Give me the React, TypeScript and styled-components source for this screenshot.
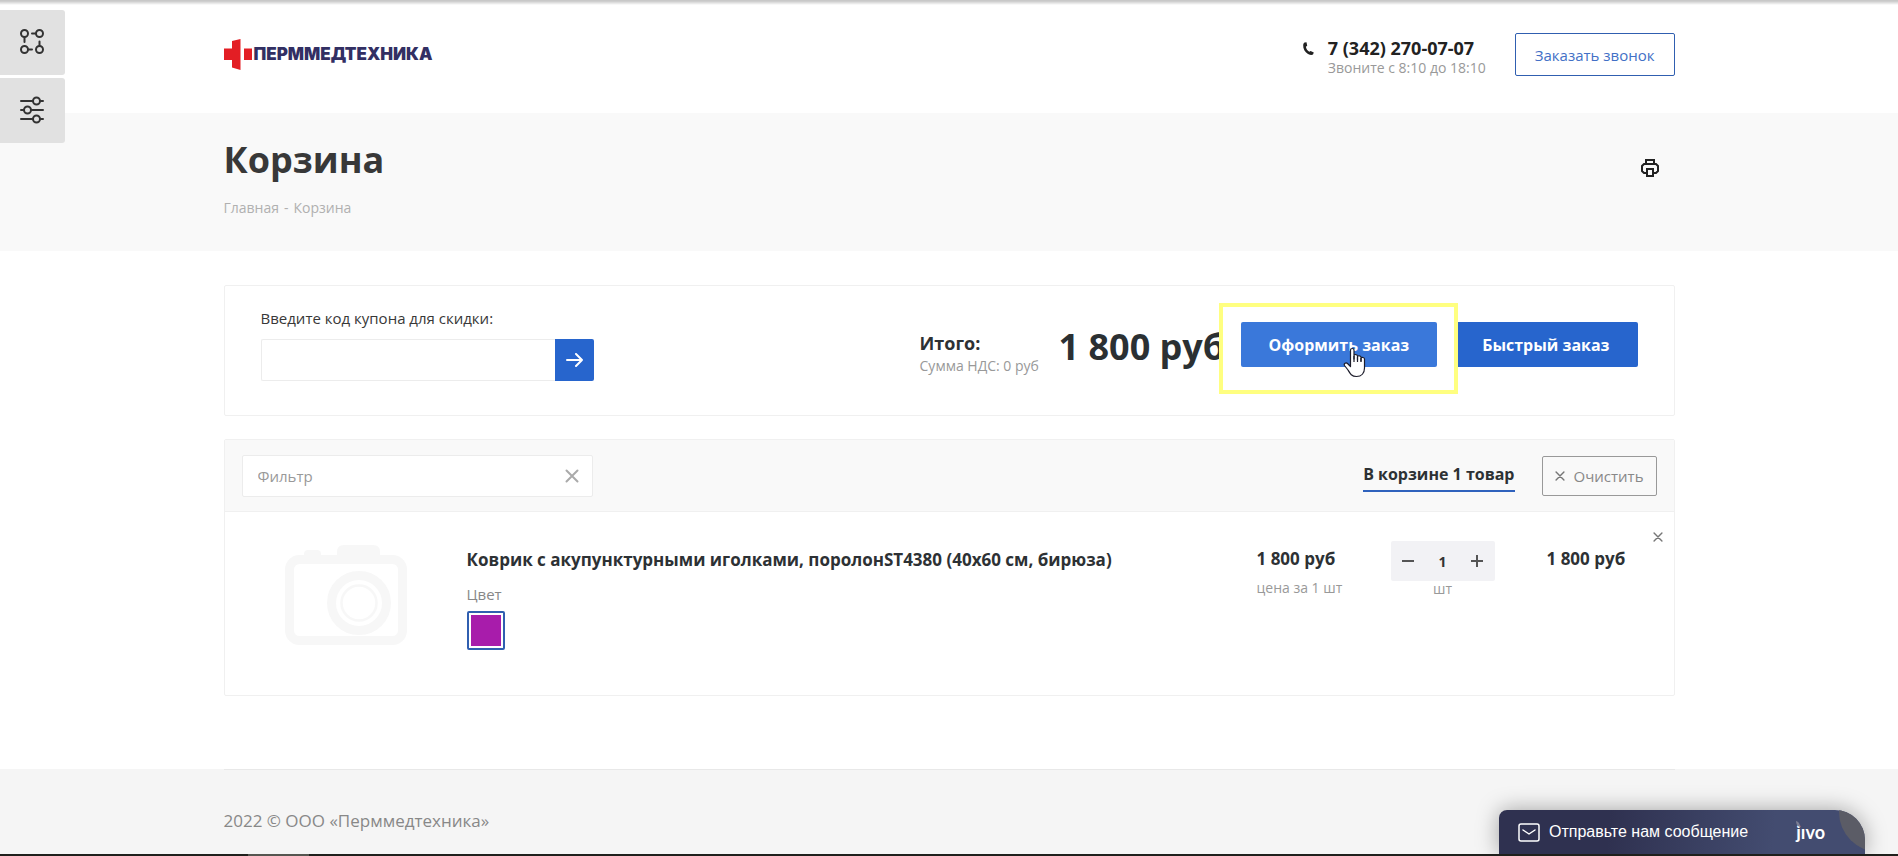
import React from "react";
import styled, { createGlobalStyle } from "styled-components";

const GlobalStyle = createGlobalStyle`
  *, *::before, *::after { box-sizing: border-box; }
  html, body { margin: 0; padding: 0; }
  body {
    background: #fff;
    color: #2d3134;
    font-family: "Open Sans", "Noto Sans", sans-serif;
    font-size: 14px;
    line-height: 20px;
  }
  button, input { font-family: inherit; margin: 0; }
  button { cursor: pointer; padding: 0; border: 0; background: none; }
  a { color: inherit; text-decoration: none; }
`;

const Page = styled.div`
  min-height: 100vh;
  display: flex;
  flex-direction: column;
`;

const TopShade = styled.div`
  position: fixed;
  inset: 0 0 auto 0;
  height: 5px;
  z-index: 5;
  background: linear-gradient(#c8c8c8 20%, #ffffff00);
`;

const Container = styled.div`
  width: 100%;
  max-width: 1451px;
  margin: 0 auto;
`;

const HeaderRow = styled(Container).attrs({ as: "header" })`
  display: flex;
  align-items: flex-start;
  padding: 33px 0 37px;
`;

const LogoLink = styled.a`
  display: flex;
  align-items: center;
  gap: 2px;
  margin-top: 6px;
  margin-right: auto;
  font-family: Inter, sans-serif;
  font-weight: 900;
  font-size: 17px;
  line-height: 31px;
  color: #322f63;
`;

const Phone = styled.div`
  display: grid;
  grid-template-columns: 25px 187px;
  margin-top: 3px;
  svg { margin-top: 6px; }
`;

const PhoneNumber = styled.a`
  font-size: 18px;
  line-height: 24px;
  font-weight: 700;
  color: #222;
`;

const PhoneHours = styled.span`
  grid-column: 2;
  line-height: 16px;
  color: #999;
`;

const CallButton = styled.button`
  height: 43px;
  padding: 0 19px;
  border: 1px solid #305fb0;
  border-radius: 2px;
  color: #4270c6;
  font-size: 15px;
`;

const TitleBand = styled.div`
  background: #f9f9f9;
  padding: 25px 0 33px;
`;

const TitleRow = styled(Container)`
  display: flex;
  justify-content: space-between;
  align-items: flex-start;
`;

const Title = styled.h1`
  margin: 0 0 16px;
  font-size: 36px;
  line-height: 44px;
  font-weight: 700;
  color: #383838;
`;

const Crumbs = styled.nav`
  display: flex;
  gap: 5px;
  color: #b0b0b0;
`;

const PrintButton = styled.button`
  margin: 21px 16px 0 0;
  height: 18px;
`;

const Main = styled(Container).attrs({ as: "main" })`
  padding: 34px 0 73px;
  display: grid;
  gap: 23px;
`;

const Panel = styled.section`
  border: 1px solid #f0f0f0;
  border-radius: 2px;
`;

const Summary = styled(Panel)`
  display: flex;
  align-items: flex-start;
  height: 131px;
  padding: 0 36px;
`;

const Coupon = styled.form`
  margin-right: auto;
  padding-top: 22px;
`;

const CouponLabel = styled.label`
  display: block;
  font-size: 15px;
  line-height: 20px;
  margin-bottom: 11px;
  color: #383838;
`;

const CouponField = styled.div`
  display: flex;
`;

const TextInput = styled.input`
  height: 42px;
  border: 1px solid #ececec;
  border-radius: 2px;
  background: #fff;
  padding: 0 15px;
  font-size: 15px;
  color: #333;
  &::placeholder { color: #999; opacity: 1; }
`;

const CouponInput = styled(TextInput)`
  width: 294px;
  border-right: 0;
  border-radius: 2px 0 0 2px;
`;

const CouponButton = styled.button`
  display: grid;
  place-items: center;
  width: 39px;
  height: 42px;
  background: #2765cd;
  border-radius: 0 2px 2px 0;
`;

const Total = styled.div`
  width: 139px;
  padding-top: 45px;
`;

const TotalLabel = styled.div`
  font-size: 18px;
  line-height: 24px;
  font-weight: 700;
`;

const Muted = styled.div`
  line-height: 22px;
  color: #999;
`;

const TotalPrice = styled.div`
  width: 182px;
  padding-top: 39px;
  white-space: nowrap;
  font-size: 36px;
  line-height: 44px;
  font-weight: 700;
  color: #2b3033;
`;

const Actions = styled.div`
  display: flex;
  gap: 17px;
  padding-top: 36px;
`;

const OrderButton = styled.button<{ $active?: boolean }>`
  position: relative;
  height: 45px;
  padding: 0 28px;
  border-radius: 2px;
  background: ${(p) => (p.$active ? "#3a78da" : "#2765cd")};
  color: #fff;
  font-size: 16px;
  font-weight: 700;
  white-space: nowrap;
`;

const Spotlight = styled.div`
  position: relative;
  z-index: 1;
  &::before {
    content: "";
    position: absolute;
    inset: -19px -21px -27px -22px;
    background: #fff;
    border: 4px solid #ffff80;
  }
`;

const Pointer = styled.svg`
  position: absolute;
  left: 102px;
  top: 25px;
`;

const Toolbar = styled.div`
  display: flex;
  align-items: center;
  height: 72px;
  padding: 0 17px;
  background: #f9f9f9;
  border-bottom: 1px solid #f0f0f0;
`;

const Filter = styled.div`
  position: relative;
  width: 351px;
  margin-right: auto;
`;

const FilterInput = styled(TextInput)`
  width: 100%;
`;

const FilterClear = styled.button`
  position: absolute;
  right: 14px;
  top: 14px;
  height: 14px;
`;

const CountTab = styled.a`
  margin-top: 3px;
  margin-right: 27px;
  padding-bottom: 4px;
  border-bottom: 2px solid #2f62bd;
  font-size: 16px;
  line-height: 24px;
  font-weight: 700;
`;

const ClearButton = styled.button`
  display: flex;
  align-items: center;
  gap: 9px;
  height: 40px;
  padding: 0 12px;
  border: 1px solid #999;
  border-radius: 2px;
  font-size: 15px;
  color: #888;
`;

const Items = styled.ul`
  list-style: none;
  margin: 0;
  padding: 0;
`;

const Item = styled.li`
  position: relative;
  display: grid;
  grid-template-columns: 182px minmax(0, 1fr) 134px 104px 179px;
  height: 183px;
  padding: 29px 0 0 60px;
`;

const Placeholder = styled.svg`
  margin-top: 4px;
`;

const ItemName = styled.a`
  display: block;
  padding-top: 7px;
  font-size: 17px;
  line-height: 24px;
  font-weight: 700;
`;

const PropName = styled.div`
  margin-top: 12px;
  font-size: 15px;
  line-height: 20px;
  color: #888;
`;

const Swatch = styled.button`
  display: block;
  margin-top: 7px;
  width: 38px;
  height: 39px;
  padding: 2px;
  border: 2px solid #305fb0;
  border-radius: 2px;
  background: #a81cab content-box;
`;

const Price = styled.div`
  padding-top: 6px;
  font-size: 17px;
  line-height: 24px;
  font-weight: 700;
  margin-bottom: 6px;
`;

const Sum = styled(Price)`
  padding-left: 52px;
`;

const Quantity = styled.div`
  text-align: center;
  line-height: 16px;
  color: #999;
`;

const Stepper = styled.div`
  display: flex;
  align-items: center;
  height: 40px;
  background: #f2f2f5;
  border-radius: 2px;
`;

const StepButton = styled.button`
  width: 35px;
  height: 40px;
  display: grid;
  place-items: center;
`;

const StepInput = styled.input`
  width: 34px;
  height: 40px;
  padding: 0;
  border: 0;
  background: none;
  text-align: center;
  font-size: 14px;
  font-weight: 700;
  color: #333;
`;

const RemoveButton = styled.button`
  position: absolute;
  top: 20px;
  right: 11px;
  display: flex;
`;

const Footer = styled.footer`
  flex: 1 0 auto;
  background: #f5f5f5;
`;

const FooterInner = styled(Container)`
  border-top: 1px solid #e8e8e8;
  padding: 39px 0 23px;
  font-size: 17px;
  line-height: 24px;
  color: #888;
`;

const SideTools = styled.div`
  position: fixed;
  left: 0;
  top: 10px;
  display: grid;
  gap: 3px;
`;

const SideTool = styled.button`
  display: grid;
  place-items: center;
  width: 65px;
  height: 65px;
  padding: 0 2px 2px 0;
  background: #e1e1e1;
  border-radius: 0 3px 3px 0;
`;

const ChatBar = styled.button`
  position: fixed;
  right: 33px;
  bottom: 2px;
  width: 366px;
  height: 44px;
  display: flex;
  align-items: center;
  padding: 0 40px 0 19px;
  overflow: hidden;
  border-radius: 8px 30px 0 0;
  background: linear-gradient(95deg, #2f3150 30%, #434c70 75%);
  color: #fff;
  font-family: "Liberation Sans", sans-serif;
  font-size: 16px;
`;

const ChatShadow = styled.div`
  position: fixed;
  right: 33px;
  bottom: 2px;
  width: 366px;
  height: 44px;
  border-radius: 8px 30px 0 0;
  box-shadow: 0 0 22px rgba(0, 0, 0, 0.35);
`;

const ChatText = styled.span`
  margin: 0 auto 0 9px;
`;

const ChatLogo = styled.span`
  position: relative;
  font-family: Lato, sans-serif;
  font-size: 18px;
  font-weight: 700;
  svg { position: absolute; left: 0; top: 0; }
`;

const ChatCorner = styled.span`
  position: absolute;
  right: -54px;
  top: -38px;
  width: 80px;
  height: 80px;
  border-radius: 50%;
  background: #5b5c66;
`;

const BottomEdge = styled.div`
  position: fixed;
  inset: auto 0 0 0;
  height: 2px;
  background: linear-gradient(90deg, #1f201c 248px, #555650 248px 309px, #1f201c 309px);
`;

const Cross = ({ size, color, width }: { size: number; color: string; width: number }) => (
  <svg width={size} height={size} viewBox="0 0 14 14" fill="none" stroke={color} strokeWidth={width} strokeLinecap="round">
    <path d="M1.5 1.5 12.5 12.5M12.5 1.5 1.5 12.5" />
  </svg>
);

export default function App() {
  return (
    <Page>
      <GlobalStyle />
      <TopShade />
      <HeaderRow>
        <LogoLink href="#">
          <svg width="28" height="31" viewBox="0 0 28 31" fill="#e31e24">
            <path d="M8 2 16.500 0V31L8 28.500V21H0V9.500H8ZM20 9.500H28V21H20Z" />
          </svg>
          <span>ПЕРММЕДТЕХНИКА</span>
        </LogoLink>
        <Phone>
          <svg width="11" height="14" viewBox="0 0 11 14" fill="#222">
            <path d="M1.500.6 3.500.2 4.200 3.800 2.900 4.800C3.200 7 4.500 8.800 6.300 9.800L7.600 9 10.800 10.600 10 12.600C9 13.300 7 13.200 5 12 1.800 10 0 6.500.2 3.200.3 2 .8 1 1.500.6Z" />
          </svg>
          <PhoneNumber href="#">7 (342) 270-07-07</PhoneNumber>
          <PhoneHours>Звоните с 8:10 до 18:10</PhoneHours>
        </Phone>
        <CallButton type="button">Заказать звонок</CallButton>
      </HeaderRow>

      <TitleBand>
        <TitleRow>
          <div>
            <Title>Корзина</Title>
            <Crumbs>
              <a href="#">Главная</a>
              <span>-</span>
              <span>Корзина</span>
            </Crumbs>
          </div>
          <PrintButton type="button" aria-label="Печать">
            <svg width="18" height="18" viewBox="0 0 18 18" fill="none" stroke="#222" strokeWidth="2">
              <path d="M5 5V1H13V5M5 14H3L1 12V7L3 5H15L17 7V12L15 14H13M6 10H12V17H6Z" />
            </svg>
          </PrintButton>
        </TitleRow>
      </TitleBand>

      <Main>
        <Summary>
          <Coupon>
            <CouponLabel htmlFor="coupon">Введите код купона для скидки:</CouponLabel>
            <CouponField>
              <CouponInput id="coupon" type="text" />
              <CouponButton type="button" aria-label="Применить">
                <svg width="17" height="14" viewBox="0 0 17 14" fill="none" stroke="#fff" strokeWidth="2" strokeLinecap="round" strokeLinejoin="round">
                  <path d="M1 7H16M10 1 16 7 10 13" />
                </svg>
              </CouponButton>
            </CouponField>
          </Coupon>
          <Total>
            <TotalLabel>Итого:</TotalLabel>
            <Muted>Сумма НДС: 0 руб</Muted>
          </Total>
          <TotalPrice>1 800 руб</TotalPrice>
          <Actions>
            <Spotlight>
              <OrderButton type="button" $active>Оформить заказ</OrderButton>
              <Pointer width="24" height="31" viewBox="0 0 24 31" fill="#fff" stroke="#1d1d2b" strokeWidth="1.200" strokeLinejoin="round">
                <path d="M7.500 19.500V3C7.500 1 11 1 11 3V12V8.500C11.500 7 14.500 7.300 14.500 9V13V9.500C15 8.300 18 8.600 18 10.300V14V11C18.500 10 21.500 10.300 21.500 12V21C21.500 26 18.500 29.500 13.500 29.500 8.500 29.500 7 26.500 5 23L1.500 18.500C.5 16.500 3 15 4.500 16.500Z" />
                <path d="M11 9V15M14.500 10V15M18 11V15" />
              </Pointer>
            </Spotlight>
            <OrderButton type="button">Быстрый заказ</OrderButton>
          </Actions>
        </Summary>

        <Panel>
          <Toolbar>
            <Filter>
              <FilterInput type="text" placeholder="Фильтр" aria-label="Фильтр" />
              <FilterClear type="button" aria-label="Сбросить фильтр">
                <Cross size={14} color="#aaa" width={2} />
              </FilterClear>
            </Filter>
            <CountTab href="#">В корзине 1 товар</CountTab>
            <ClearButton type="button">
              <Cross size={10} color="#777" width={2} />
              Очистить
            </ClearButton>
          </Toolbar>
          <Items>
            <Item>
              <Placeholder width="122" height="100" viewBox="0 0 122 100" fill="none" stroke="#f7f7f7">
                <path d="M19 13V9Q19 5 23 5H32Q36 5 36 9V13M52 13V7Q52 0 59 0H88Q95 0 95 7V13" fill="#f7f7f7" stroke="none" />
                <rect x="4.500" y="14.500" width="113" height="81" rx="10" strokeWidth="9" />
                <circle cx="74" cy="58" r="27.500" strokeWidth="9" />
                <circle cx="74" cy="58" r="17.500" strokeWidth="2.500" />
              </Placeholder>
              <div>
                <ItemName href="#">Коврик с акупунктурными иголками, поролонST4380 (40х60 см, бирюза)</ItemName>
                <PropName>Цвет</PropName>
                <Swatch type="button" aria-label="Цвет" />
              </div>
              <div>
                <Price>1 800 руб</Price>
                <Muted>цена за 1 шт</Muted>
              </div>
              <Quantity>
                <Stepper>
                  <StepButton type="button" aria-label="Меньше">
                    <svg width="12" height="12" stroke="#555" strokeWidth="2"><path d="M0 6H12" /></svg>
                  </StepButton>
                  <StepInput type="text" defaultValue="1" aria-label="Количество" />
                  <StepButton type="button" aria-label="Больше">
                    <svg width="12" height="12" stroke="#555" strokeWidth="2"><path d="M0 6H12M6 0V12" /></svg>
                  </StepButton>
                </Stepper>
                шт
              </Quantity>
              <Sum>1 800 руб</Sum>
              <RemoveButton type="button" aria-label="Удалить">
                <Cross size={10} color="#777" width={2} />
              </RemoveButton>
            </Item>
          </Items>
        </Panel>
      </Main>

      <Footer>
        <FooterInner>2022 © ООО «Перммедтехника»</FooterInner>
      </Footer>

      <SideTools>
        <SideTool type="button" aria-label="Маршрут">
          <svg width="24" height="26" viewBox="0 0 24 26" fill="none" stroke="#333" strokeWidth="2" strokeLinecap="round">
            <circle cx="4.500" cy="4.500" r="3.500" /><circle cx="19.500" cy="4.500" r="3.500" />
            <circle cx="4.500" cy="20.500" r="3.500" /><circle cx="19.500" cy="20.500" r="3.500" />
            <path d="M4.500 8V13M16 4.500H12M8 20.500H12M19.500 17V12.500" />
          </svg>
        </SideTool>
        <SideTool type="button" aria-label="Настройки">
          <svg width="24" height="28" viewBox="0 0 24 28" fill="none" stroke="#333" strokeWidth="2" strokeLinecap="round">
            <circle cx="16.500" cy="5" r="3.500" /><circle cx="7.500" cy="14" r="3.500" /><circle cx="16.500" cy="23" r="3.500" />
            <path d="M1 5H13M20 5H23M1 14H4M11 14H23M1 23H13M20 23H23" />
          </svg>
        </SideTool>
      </SideTools>

      <ChatShadow />
      <ChatBar type="button">
        <svg width="22" height="19" viewBox="0 0 22 19" fill="none" stroke="#fff" strokeWidth="1.500" strokeLinecap="round" strokeLinejoin="round">
          <rect x="1" y="1" width="20" height="17" rx="2" />
          <path d="M5 7 11 11 17 7" />
        </svg>
        <ChatText>Отправьте нам сообщение</ChatText>
        <ChatLogo>
          <svg width="4" height="6" viewBox="0 0 4 6" fill="#7b7d92"><path d="M0 0Q4 1 4 6Q0 5 0 0Z" /></svg>
          jıvo
        </ChatLogo>
        <ChatCorner />
      </ChatBar>
      <BottomEdge />
    </Page>
  );
}
